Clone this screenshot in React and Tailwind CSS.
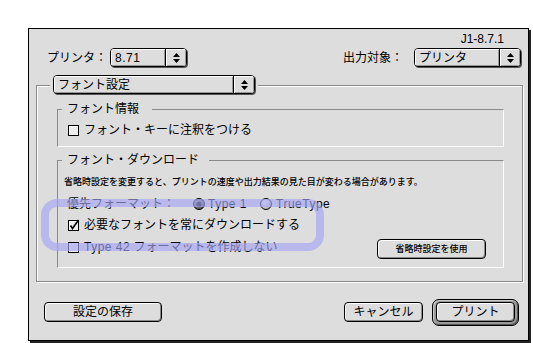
import React from 'react';

// Mac OS 8 style print dialog, font settings pane

const Arrows = () => (
    <svg width="7" height="10" viewBox="0 0 7 10">
        <path d="M3.5 0 L7 4 L0 4 Z" fill="#000" />
        <path d="M0 6 L7 6 L3.5 10 Z" fill="#000" />
    </svg>
);

const Popup = ({ width, children }) => (
    <div className={`flex h-[19px] ${width} shrink-0 overflow-hidden rounded-[4px] border border-black bg-[#dddddd] shadow-[1px_1px_0_#555]`}>
        <div className="flex flex-1 items-center pl-[4px] text-[12px] leading-none shadow-[inset_1px_1px_0_#fff,inset_-1px_-1px_0_#999]">
            {children}
        </div>
        <div className="flex w-[21px] items-center justify-center border-l border-black bg-[#dddddd] shadow-[inset_1px_1px_0_#fff,inset_-1px_-1px_0_#999]">
            <Arrows />
        </div>
    </div>
);

const Checkbox = ({ checked }) => (
    <svg width="13" height="12" viewBox="0 0 13 12" className="shrink-0">
        <rect x="0.5" y="1.5" width="10" height="10" fill="#eeeeee" stroke="#000" />
        <path d="M1.5 10.5 V2.5 H9.5" fill="none" stroke="#fff" />
        {checked && <path d="M2.5 6.5 L4.5 9.5 L10.5 1" fill="none" stroke="#000" strokeWidth="1.6" />}
    </svg>
);

const Radio = ({ selected }) => (
    <svg width="12" height="12" viewBox="0 0 12 12" className="shrink-0">
        <defs>
            <radialGradient id={selected ? 'rsel' : 'roff'} cx="40%" cy="35%" r="70%">
                <stop offset="0%" stopColor={selected ? '#999' : '#fff'} />
                <stop offset="100%" stopColor={selected ? '#555' : '#aaa'} />
            </radialGradient>
        </defs>
        <circle cx="6" cy="6" r="5.5" fill={`url(#${selected ? 'rsel' : 'roff'})`} stroke="#000" />
        {selected && <circle cx="6" cy="6" r="2.6" fill="#111" />}
    </svg>
);

const Button = ({ width, children, small }) => (
    <div className={`flex h-[20px] ${width} shrink-0 items-center justify-center rounded-[4px] border border-black bg-[#dddddd] shadow-[inset_1px_1px_0_#fff,inset_-1px_-1px_0_#888] ${small ? 'text-[9px] font-medium' : 'text-[12px]'} leading-none`}>
        {children}
    </div>
);

const App = () => {
    return (
        <div className="relative h-[343px] w-[533px] overflow-hidden bg-white font-['Liberation_Sans','Noto_Sans_CJK_JP',sans-serif] text-black">
            <div className="ml-[28px] mt-[28px] flex h-[313px] w-[501px] flex-col border border-black bg-[#dddddd] shadow-[2px_2px_0_#222]">
                {/* version */}
                <div className="mt-[3px] h-[14px] pr-[24px] text-right text-[12px] leading-[14px]">J1-8.7.1</div>

                {/* printer / destination */}
                <div className="mt-[2px] flex h-[19px] items-center pl-[18px] pr-[7px]">
                    <span className="w-[63px] shrink-0 text-[12px] leading-none">プリンタ：</span>
                    <Popup width="w-[77px]"><span className="tracking-[0.5px]">8.71</span></Popup>
                    <div className="flex-1" />
                    <span className="mr-[11px] text-[12px] leading-none">出力対象：</span>
                    <Popup width="w-[107px]">プリンタ</Popup>
                </div>

                {/* font settings pane */}
                <div className="ml-[7px] mr-[5px] mt-[18px] flex h-[197px] flex-col border border-[#888] shadow-[1px_1px_0_#fff,inset_1px_1px_0_#fff]">
                    <div className="ml-[13px] mt-[-11px] w-fit bg-[#dddddd] px-[3px]">
                        <Popup width="w-[202px]">フォント設定</Popup>
                    </div>

                    {/* font info */}
                    <div className="ml-[20px] mr-[18px] mt-[15px] flex h-[38px] flex-col border border-[#8a8a8a] border-b-white border-r-white">
                        <div className="ml-[4px] mt-[-8px] h-[14px] w-fit bg-[#dddddd] pl-[5px] pr-[13px] text-[12px] leading-[14px]">フォント情報</div>
                        <div className="mt-[7px] flex h-[14px] items-center gap-[3px] pl-[10px] text-[12px] leading-none">
                            <Checkbox />
                            <span>フォント・キーに注釈をつける</span>
                        </div>
                    </div>

                    {/* font download */}
                    <div className="ml-[20px] mr-[18px] mt-[13px] flex h-[108px] flex-col border border-[#8a8a8a] border-b-white border-r-white">
                        <div className="ml-[4px] mt-[-8px] h-[14px] w-fit bg-[#dddddd] pl-[5px] pr-[10px] text-[12px] leading-[14px]">フォント・ダウンロード</div>
                        <div className="mt-[10px] h-[11px] pl-[6px] text-[9px] font-medium leading-[11px]">省略時設定を変更すると、プリントの速度や出力結果の見た目が変わる場合があります。</div>
                        <div className="mt-[9px] flex h-[14px] items-center pl-[9px] text-[12px] leading-none">
                            <span className="w-[126px] shrink-0">優先フォーマット：</span>
                            <Radio selected />
                            <span className="ml-[3px] w-[52px] shrink-0 tracking-[0.5px]">Type 1</span>
                            <Radio />
                            <span className="ml-[4px] tracking-[0.5px]">TrueType</span>
                        </div>
                        <div className="mt-[7px] flex h-[14px] items-center gap-[3px] pl-[10px] text-[12px] leading-none">
                            <Checkbox checked />
                            <span>必要なフォントを常にダウンロードする</span>
                        </div>
                        <div className="mt-[7px] flex h-[20px] items-start justify-between pl-[10px] pr-[17px]">
                            <div className="mt-[1px] flex h-[14px] items-center gap-[3px] text-[12px] leading-none">
                                <Checkbox />
                                <span><span className="tracking-[0.5px]">Type 42</span> フォーマットを作成しない</span>
                            </div>
                            <Button width="w-[109px]" small>省略時設定を使用</Button>
                        </div>
                    </div>
                </div>

                {/* bottom buttons */}
                <div className="mt-[20px] flex h-[20px] items-center pl-[15px] pr-[9px]">
                    <Button width="w-[118px]">設定の保存</Button>
                    <div className="flex-1" />
                    <Button width="w-[79px]">キャンセル</Button>
                    <div className="ml-[9px] flex h-[27px] w-[87px] items-center justify-center rounded-[7px] border border-black bg-[#9a9a9a] shadow-[inset_1px_1px_0_#ccc,inset_-1px_-1px_0_#555]">
                        <Button width="w-[79px]">プリント</Button>
                    </div>
                </div>
            </div>

            {/* annotation highlight */}
            <div className="absolute left-[41px] top-[199px] h-[52px] w-[283px] rounded-[16px] border-[8px] border-[#a4a4f4]/65" />
        </div>
    );
};

export default App;
